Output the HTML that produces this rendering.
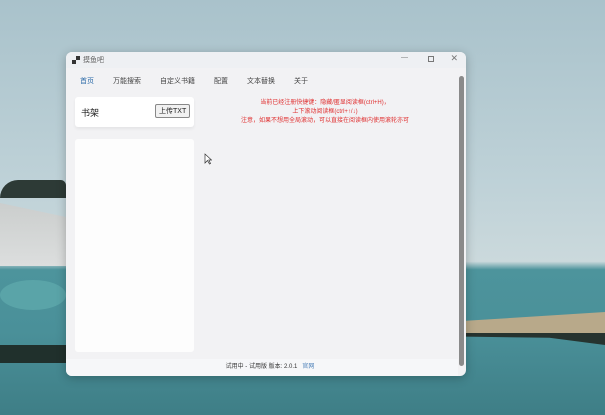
<!DOCTYPE html>
<html><head><meta charset="utf-8"><style>
*{margin:0;padding:0;box-sizing:border-box}
body{width:605px;height:415px;overflow:hidden;position:relative;font-family:"Liberation Sans","Noto Sans CJK SC",sans-serif;background:linear-gradient(#a9c2cb 0%,#bfd2d8 45%,#cbd9dc 63%,#4d949c 65%,#4a9099 80%,#3e7e86 100%)}
.abs{position:absolute}
.win{left:66px;top:52px;width:400px;height:324px;background:#f2f2f4;border-radius:6px;box-shadow:0 2px 10px rgba(0,0,0,.25);overflow:hidden}
.tb{height:16px;font-size:7px;color:#666;display:flex;align-items:center;padding-left:6px}
.tabs{position:absolute;top:24px;left:14px;font-size:7px;color:#444;display:flex;gap:0}
.tabs span{margin-right:19px}
.note{position:absolute;top:47px;left:129px;width:260px;text-align:center;color:#e03030;font-size:6px;line-height:8.8px;white-space:nowrap}
</style></head><body>
<div class="abs" style="left:0;top:180px;width:66px;height:18px;background:#2d3a36;border-radius:20px 6px 0 0"></div>
<div class="abs" style="left:0;top:196px;width:66px;height:70px;background:linear-gradient(#c9cccb,#dcdede);clip-path:polygon(0 10%,100% 30%,100% 100%,0 100%)"></div>
<div class="abs" style="left:0;top:280px;width:66px;height:30px;background:#5aa4a8;border-radius:50%"></div>
<div class="abs" style="left:0;top:345px;width:66px;height:18px;background:#20302c"></div>
<div class="abs" style="left:466px;top:312px;width:139px;height:22px;background:#b8a98a;clip-path:polygon(0 40%,100% 0,100% 100%,0 100%)"></div>
<div class="abs" style="left:466px;top:333px;width:139px;height:12px;background:#26332f;clip-path:polygon(0 0,100% 0,100% 100%,60% 40%,0 30%)"></div>
<div class="abs win">
 <div class="tb" style="background:#eef0f3"><span style="font-size:8px;color:#333;margin-right:3px">▞</span>摸鱼吧
  <span style="position:absolute;right:58px;top:2px;color:#777">—</span>
  <span style="position:absolute;right:32px;top:4px;width:6px;height:6px;border:1px solid #777"></span>
  <span style="position:absolute;right:8px;top:1px;color:#777;font-size:9px">✕</span></div>
 <div class="tabs"><span style="color:#2b6aa8">首页</span><span>万能搜索</span><span>自定义书籍</span><span>配置</span><span>文本替换</span><span>关于</span></div>
 <div class="abs" style="left:9px;top:45px;width:119px;height:30px;background:#fff;border-radius:3px;box-shadow:0 2px 3px rgba(0,0,0,.06)">
  <span class="abs" style="left:6px;top:9px;font-size:9px;color:#222">书架</span>
  <span class="abs" style="left:80px;top:7px;font-size:7px;border:1px solid #888;background:#f1f1f1;padding:1px 3px;color:#222;border-radius:2px;white-space:nowrap">上传TXT</span>
 </div>
 <div class="abs" style="left:9px;top:87px;width:119px;height:213px;background:#fdfdfd;border-radius:3px"></div>
 <div class="note">当前已经注册快捷键：隐藏/匿显阅读框(ctrl+H)，<br>上下滚动阅读框(ctrl+↑/↓)<br>注意，如果不想用全局滚动，可以直接在阅读框内使用滚轮亦可</div>
 <div class="abs" style="left:0;top:307px;width:392px;height:17px;background:#f6f7f9;font-size:6px;color:#333;text-align:center;line-height:17px;padding-left:16px">试用中 - 试用版 版本: 2.0.1 &nbsp; <span style="color:#4a7fb8">官网</span></div>
 <div class="abs" style="left:393px;top:24px;width:5px;height:290px;background:#8a8a8a;border-radius:3px"></div>
</div>
<svg class="abs" style="left:204px;top:153px" width="8" height="12"><path d="M1 1 L1 10 L3.5 7.5 L5.5 11 L6.5 10.5 L4.8 7 L7.5 7 Z" fill="#fff" stroke="#333" stroke-width=".7"/></svg>
</body></html>
